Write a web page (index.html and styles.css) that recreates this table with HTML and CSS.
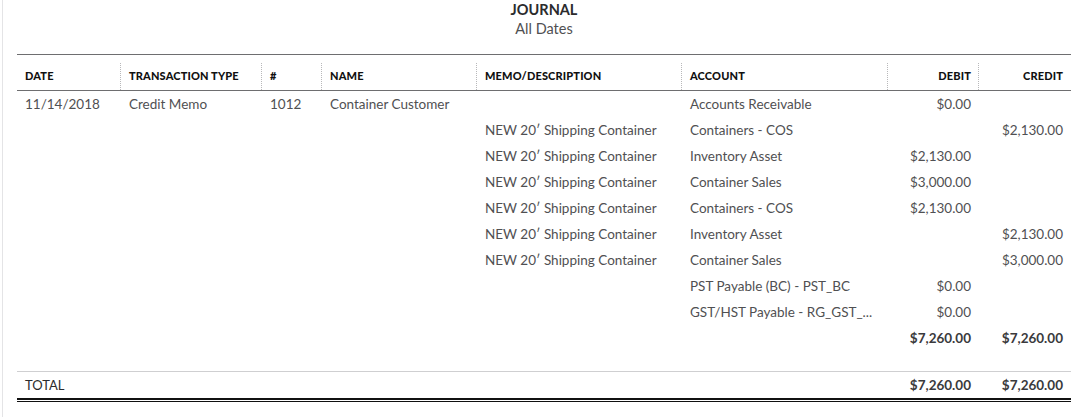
FILE: index.html
```html
<!DOCTYPE html>
<html lang="en">
<head>
<meta charset="utf-8">
<title>Journal</title>
<link rel="stylesheet" href="styles.css">
</head>
<body>
<div class="page">
  <header class="report-head">
    <div class="report-title">JOURNAL</div>
    <div class="report-sub">All Dates</div>
  </header>
  <table class="journal">
    <colgroup>
      <col class="c-date"><col class="c-type"><col class="c-num"><col class="c-name">
      <col class="c-memo"><col class="c-acct"><col class="c-debit"><col class="c-credit">
    </colgroup>
    <thead>
      <tr>
        <th>DATE</th>
        <th>TRANSACTION TYPE</th>
        <th>#</th>
        <th>NAME</th>
        <th>MEMO/DESCRIPTION</th>
        <th>ACCOUNT</th>
        <th class="num">DEBIT</th>
        <th class="num">CREDIT</th>
      </tr>
    </thead>
    <tbody>
      <tr>
        <td>11/14/2018</td><td>Credit Memo</td><td>1012</td><td>Container Customer</td>
        <td></td><td>Accounts Receivable</td><td class="num">$0.00</td><td class="num"></td>
      </tr>
      <tr>
        <td></td><td></td><td></td><td></td>
        <td>NEW 20′ Shipping Container</td><td>Containers - COS</td><td class="num"></td><td class="num">$2,130.00</td>
      </tr>
      <tr>
        <td></td><td></td><td></td><td></td>
        <td>NEW 20′ Shipping Container</td><td>Inventory Asset</td><td class="num">$2,130.00</td><td class="num"></td>
      </tr>
      <tr>
        <td></td><td></td><td></td><td></td>
        <td>NEW 20′ Shipping Container</td><td>Container Sales</td><td class="num">$3,000.00</td><td class="num"></td>
      </tr>
      <tr>
        <td></td><td></td><td></td><td></td>
        <td>NEW 20′ Shipping Container</td><td>Containers - COS</td><td class="num">$2,130.00</td><td class="num"></td>
      </tr>
      <tr>
        <td></td><td></td><td></td><td></td>
        <td>NEW 20′ Shipping Container</td><td>Inventory Asset</td><td class="num"></td><td class="num">$2,130.00</td>
      </tr>
      <tr>
        <td></td><td></td><td></td><td></td>
        <td>NEW 20′ Shipping Container</td><td>Container Sales</td><td class="num"></td><td class="num">$3,000.00</td>
      </tr>
      <tr>
        <td></td><td></td><td></td><td></td>
        <td></td><td>PST Payable (BC) - PST_BC</td><td class="num">$0.00</td><td class="num"></td>
      </tr>
      <tr>
        <td></td><td></td><td></td><td></td>
        <td></td><td>GST/HST Payable - RG_GST_...</td><td class="num">$0.00</td><td class="num"></td>
      </tr>
      <tr class="subtotal">
        <td></td><td></td><td></td><td></td>
        <td></td><td></td><td class="num">$7,260.00</td><td class="num">$7,260.00</td>
      </tr>
      <tr class="spacer"><td colspan="8"></td></tr>
    </tbody>
    <tfoot>
      <tr class="total">
        <td>TOTAL</td><td></td><td></td><td></td>
        <td></td><td></td><td class="num">$7,260.00</td><td class="num">$7,260.00</td>
      </tr>
    </tfoot>
  </table>
  <div class="double-rule"></div>
</div>
</body>
</html>
```
FILE: styles.css
```css
html, body {
  margin: 0;
  padding: 0;
  background: #fff;
}
body {
  font-family: "Lato", "Noto Sans", "Liberation Sans", sans-serif;
  color: #505052;
  font-size: 13.5px;
}
.page {
  margin-left: 2px;
  border-left: 1px solid #e4e4e6;
  padding: 0 13px 0 14px;
  min-height: 417px;
  box-sizing: border-box;
}
.report-head {
  text-align: center;
  padding-top: 1px;
  height: 54px;
  box-sizing: border-box;
}
.report-title {
  font-weight: 700;
  font-size: 14.5px;
  color: #2b2b2d;
  line-height: 17px;
}
.report-sub {
  font-size: 14.5px;
  line-height: 19px;
  margin-top: 1px;
  color: #505052;
}
.journal {
  width: 100%;
  border-collapse: collapse;
  table-layout: fixed;
  border-top: 1px solid #6e6e70;
}
.c-date { width: 104px; }
.c-type { width: 141px; }
.c-num { width: 60px; }
.c-name { width: 155px; }
.c-memo { width: 205px; }
.c-acct { width: 206px; }
.c-debit { width: 91px; }
.c-credit { width: 92px; }

.journal th {
  position: relative;
  text-align: left;
  font-size: 11px;
  line-height: 13px;
  font-weight: 900;
  color: #111;
  height: 27px;
  padding: 0 8px 8px;
  vertical-align: bottom;
  border-bottom: 1px solid #6e6e70;
  white-space: nowrap;
  letter-spacing: 0.15px;
}
.journal th::after {
  content: "";
  position: absolute;
  right: 0;
  top: 8px;
  bottom: 0;
  border-right: 1px dotted #b8b8ba;
}
.journal th:last-child::after { display: none; }
.journal .num { text-align: right; }

.journal td {
  height: 26px;
  padding: 0 8px;
  font-size: 13.5px;
  line-height: 16px;
  white-space: nowrap;
  overflow: hidden;
  vertical-align: middle;
}
.subtotal td {
  font-weight: 700;
  color: #3a3a3c;
}
.journal .spacer td { height: 20px; }
.journal .total td {
  border-top: 1px solid #cfcfd1;
  height: 26px;
  font-weight: 700;
  color: #3a3a3c;
}
.journal .total td:first-child {
  font-weight: 400;
  color: #2b2b2d;
  font-size: 13px;
}
.double-rule {
  height: 1px;
  border-top: 2px solid #111;
  border-bottom: 1px solid #111;
}
```
